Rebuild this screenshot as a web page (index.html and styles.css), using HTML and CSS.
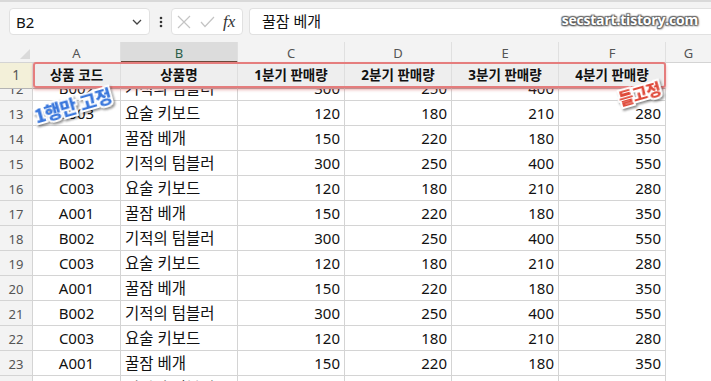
FILE: index.html
```html
<!DOCTYPE html>
<html lang="ko">
<head>
  <meta charset="UTF-8" />
  <meta name="viewport" content="width=device-width, initial-scale=1.0" />
  <title>틀 고정</title>
  <link rel="stylesheet" href="styles.css">
</head>
<body>
  <!-- formula bar -->
  <div class="toolbar">
    <div class="namebox">
      <span>B2</span>
      <svg width="10" height="6" viewBox="0 0 10 6"><path d="M1 1 L5 5 L9 1" fill="none" stroke="#444" stroke-width="1.3"/></svg>
    </div>
    <svg class="dots" width="4" height="12" viewBox="0 0 4 12"><circle cx="2" cy="2" r="1.3" fill="#333"/><circle cx="2" cy="6" r="1.3" fill="#333"/><circle cx="2" cy="10" r="1.3" fill="#333"/></svg>
    <div class="fxbox">
      <svg width="14" height="14" viewBox="0 0 14 14"><path d="M1 1 L13 13 M13 1 L1 13" stroke="#c4c4c4" stroke-width="1.2"/></svg>
      <svg width="15" height="12" viewBox="0 0 15 12"><path d="M1 6 L5 10.5 L14 1" fill="none" stroke="#c4c4c4" stroke-width="1.2"/></svg>
      <span class="fx">fx</span>
    </div>
    <div class="formula">꿀잠 베개</div>
    <div class="watermark">secstart.tistory.com</div>
  </div>

  <!-- sheet -->
  <div class="sheet">
    <div class="row colhead">
      <div class="corner"><span class="tri"></span></div>
      <div>A</div>
      <div class="sel">B</div>
      <div>C</div>
      <div>D</div>
      <div>E</div>
      <div>F</div>
      <div class="last">G</div>
    </div>

    <div class="row frozen">
      <div class="rh">1</div>
      <div class="c">상품 코드</div>
      <div class="c">상품명</div>
      <div class="c">1분기 판매량</div>
      <div class="c">2분기 판매량</div>
      <div class="c">3분기 판매량</div>
      <div class="c">4분기 판매량</div>
      <div class="blank"></div>
    </div>

    <div class="scroll">
      <div class="rows" id="rows"></div>
    </div>

    <div class="highlight"></div>
    <div class="note note-row">1행만 고정</div>
    <div class="note note-pane">틀고정</div>
  </div>

  <script>
    const products = [
      ['B002', '기적의 텀블러', 300, 250, 400, 550],
      ['C003', '요술 키보드', 120, 180, 210, 280],
      ['A001', '꿀잠 베개', 150, 220, 180, 350]
    ];

    const rows = document.getElementById('rows');
    for (let n = 12; n <= 24; n++) {
      const p = products[(n - 12) % 3];
      const row = document.createElement('div');
      row.className = 'row';
      row.innerHTML =
        `<div class="rh">${n}</div>` +
        `<div class="c code">${p[0]}</div>` +
        `<div class="c name">${p[1]}</div>` +
        p.slice(2).map(v => `<div class="c num">${v}</div>`).join('') +
        `<div class="blank"></div>`;
      rows.appendChild(row);
    }
  </script>
</body>
</html>
```

FILE: styles.css
```css
body {
  margin: 0;
  width: 711px;
  height: 381px;
  overflow: hidden;
  font-family: "Noto Sans", "Noto Sans CJK KR", sans-serif;
  background: #ffffff;
  color: #111;
}

/* formula bar */
.toolbar {
  position: relative;
  height: 40px;
  box-sizing: border-box;
  border-top: 2px solid #d9d9d9;
  background: #f3f3f3;
  padding: 6px 0 0 9px;
  display: flex;
  align-items: flex-start;
}
.namebox {
  width: 141px;
  height: 27px;
  box-sizing: border-box;
  background: #fff;
  border: 1px solid #e1e1e1;
  border-radius: 4px;
  display: flex;
  align-items: center;
  justify-content: space-between;
  padding: 0 7px 0 6px;
  font-size: 15px;
}
.dots {
  margin: 8px 8px 0 9px;
}
.fxbox {
  width: 72px;
  height: 27px;
  box-sizing: border-box;
  background: #fff;
  border: 1px solid #e1e1e1;
  border-radius: 4px;
  display: flex;
  align-items: center;
  gap: 9px;
  padding-left: 5px;
}
.fx {
  font-family: "Liberation Serif", serif;
  font-style: italic;
  font-size: 17px;
  color: #333;
  margin-left: -1px;
}
.formula {
  flex: 1;
  height: 27px;
  box-sizing: border-box;
  margin-left: 6px;
  background: #fff;
  border: 1px solid #e1e1e1;
  border-right: none;
  border-radius: 4px 0 0 4px;
  padding-left: 12px;
  font-size: 15px;
  line-height: 25px;
}
.watermark {
  position: absolute;
  right: 13px;
  top: 8px;
  font-family: "Open Sans", sans-serif;
  font-weight: 700;
  font-size: 14px;
  letter-spacing: -0.2px;
  color: #fff;
  text-shadow: 0 0 2px #444, 1px 1px 2px #555, -1px -1px 1px #777, 1px -1px 1px #777, -1px 1px 1px #777;
}

/* sheet */
.sheet {
  position: relative;
  background: #f3f3f3;
}
.row {
  display: grid;
  grid-template-columns: 33px 88px 117px 107px 107px 107px 107px 1fr;
  height: 25px;
}
.row > div {
  box-sizing: border-box;
  border-right: 1px solid #d4d4d4;
  border-bottom: 1px solid #d4d4d4;
  background: #fff;
  white-space: nowrap;
  overflow: hidden;
}

.colhead {
  height: 23px;
}
.colhead > div {
  background: #f3f3f3;
  color: #555;
  font-size: 13px;
  text-align: center;
  line-height: 22px;
  border-right-color: #e0e0e0;
  border-bottom-color: #d4d4d4;
  margin-top: 2px;
}
.colhead .corner {
  position: relative;
  border-right: none;
}
.colhead .tri {
  position: absolute;
  right: 3px;
  bottom: 3px;
  width: 0;
  height: 0;
  border-left: 10px solid transparent;
  border-bottom: 10px solid #dadada;
}
.colhead .sel {
  background: #dcdcdc;
  color: #2b5e48;
  border-bottom: 2px solid #6b4a3a;
}
.colhead .last {
  border-right: none;
}

.frozen {
  height: 26px;
}
.frozen > div {
  background: #eeeeee;
  font-weight: 700;
  font-size: 13.5px;
  text-align: center;
  line-height: 25px;
  border-right-color: #dedede;
  border-bottom: 1px solid #b4b4b4;
}
.frozen .rh {
  background: #f3f0d9;
  font-weight: 400;
}
.frozen .blank {
  background: #fff;
}

.scroll {
  height: 292px;
  overflow: hidden;
}
.rows {
  margin-top: -13px;
}

.rh {
  color: #555;
  font-size: 13px;
  text-align: center;
  line-height: 26px;
}
.rows .rh {
  background: #f3f3f3;
}
.c {
  font-size: 15px;
  line-height: 25px;
}
.code {
  text-align: center;
}
.name {
  padding-left: 4px;
  font-size: 15.5px;
}
.num {
  text-align: right;
  padding-right: 4px;
}
.row > .blank {
  border: none;
  background: #fff;
}

/* overlays */
.highlight {
  position: absolute;
  left: 33px;
  top: 22px;
  width: 633px;
  height: 26px;
  box-sizing: border-box;
  border: 2px solid #e57d7d;
  border-radius: 3px;
  box-shadow: 0 2px 3px rgba(210, 90, 90, 0.45);
}
.note {
  position: absolute;
  font-family: "Noto Sans CJK KR", sans-serif;
  font-weight: 900;
  -webkit-text-stroke: 4px #fff;
  paint-order: stroke fill;
  filter: drop-shadow(1px 2px 1px rgba(0, 0, 0, 0.45));
  transform: rotate(-16deg);
  white-space: nowrap;
}
.note-row {
  left: 33px;
  top: 52px;
  font-size: 18px;
  letter-spacing: -0.5px;
  color: #3b78dc;
}
.note-pane {
  left: 618px;
  top: 41px;
  font-size: 16px;
  letter-spacing: -0.5px;
  color: #df4a3a;
}
```
